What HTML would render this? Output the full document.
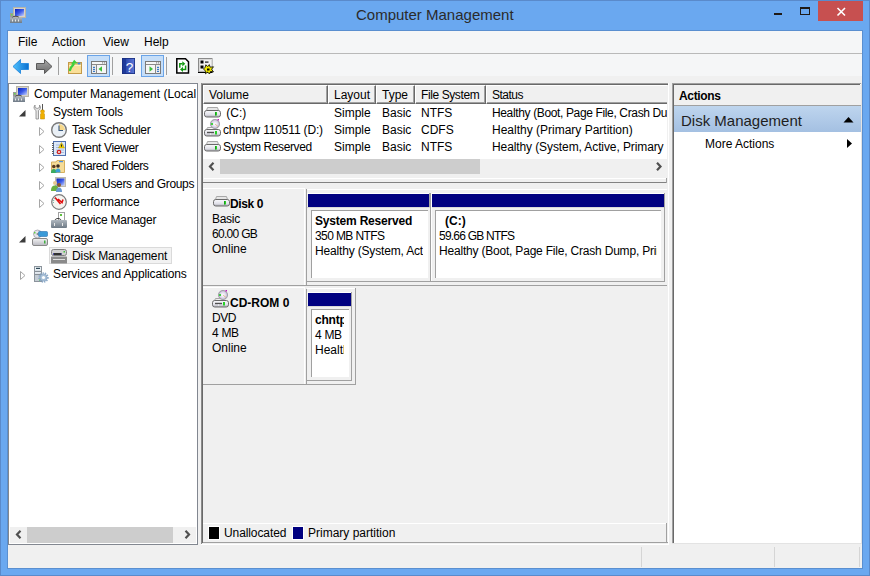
<!DOCTYPE html>
<html><head><meta charset="utf-8">
<style>
*{margin:0;padding:0;box-sizing:border-box}
html,body{width:870px;height:576px;overflow:hidden}
body{position:relative;background:#6AA8F0;font-family:"Liberation Sans",sans-serif;font-size:12px;color:#000}
.a{position:absolute}
.t{position:absolute;white-space:nowrap;font-size:12px;line-height:10px}
.b{font-weight:bold}
</style></head><body>
<!-- outer frame lines -->
<div class="a" style="left:0;top:0;width:870px;height:576px;border:1px solid #5A8ACB"></div>
<!-- title icon -->
<svg class="a" style="left:8px;top:4px" width="20" height="20" viewBox="8 4 20 20">
  <defs><linearGradient id="scr0" x1="0" y1="0" x2="1" y2="1"><stop offset="0" stop-color="#0A1FB8"/><stop offset="0.5" stop-color="#3A5AE8"/><stop offset="1" stop-color="#C8D4FF"/></linearGradient>
  <linearGradient id="dev0" x1="0" y1="0" x2="0" y2="1"><stop offset="0" stop-color="#AEB6BE"/><stop offset="1" stop-color="#6E7A86"/></linearGradient></defs>
  <rect x="13.5" y="7.5" width="12" height="10" fill="#D8D4C8" stroke="#B8B4A8"/>
  <rect x="15" y="9" width="9" height="7" fill="url(#scr0)"/>
  <rect x="10" y="13" width="3" height="5" fill="#9A9A9A"/><rect x="11" y="14" width="1.5" height="1.5" fill="#6AD850"/>
  <path d="M12 18 C13 16 17 15.5 19 17.5" fill="none" stroke="#333" stroke-width="1"/>
  <rect x="10" y="17.5" width="12" height="5.5" fill="url(#dev0)"/>
  <rect x="12" y="19.5" width="1" height="2" fill="#E8E8E8"/><rect x="15" y="19.5" width="1" height="2" fill="#E8E8E8"/><rect x="18" y="19.5" width="1" height="2" fill="#E8E8E8"/>
</svg>
<!-- title -->
<div class="t" style="left:356px;top:7px;font-size:15px;line-height:15px;color:#2B2B2B">Computer Management</div>
<!-- min / max / close -->
<div class="a" style="left:774px;top:13px;width:8px;height:2px;background:#1F1A17"></div>
<div class="a" style="left:800px;top:7px;width:10px;height:8px;border:1px solid #1F1A17;border-top-width:2px"></div>
<div class="a" style="left:818px;top:1px;width:45px;height:20px;background:#C75050"></div>
<svg class="a" style="left:830px;top:4px" width="20" height="16" viewBox="830 4 20 16">
  <path d="M837.5 8 L845 15.5 M845 8 L837.5 15.5" stroke="#fff" stroke-width="1.6"/>
</svg>
<!-- client area -->
<div class="a" style="left:7px;top:30px;width:856px;height:539px;border:1px solid #5A8FD0;background:#F0F0F0"></div>
<!-- menu bar -->
<div class="a" style="left:8px;top:31px;width:854px;height:23px;background:#F5F6F7;border-bottom:1px solid #B9B9B9"></div>
<div class="t" style="left:18px;top:37px">File</div>
<div class="t" style="left:52px;top:37px">Action</div>
<div class="t" style="left:103px;top:37px">View</div>
<div class="t" style="left:144px;top:37px">Help</div>
<!-- toolbar -->
<div class="a" style="left:8px;top:54px;width:854px;height:22px;background:#F5F6F7"></div>
<!-- tree pane -->
<div class="a" style="left:8px;top:83px;width:190px;height:462px;background:#fff;border:1px solid #828790"></div>
<!-- toolbar icons -->
<svg class="a" style="left:8px;top:54px" width="220" height="23" viewBox="8 54 220 23">
  <defs>
    <linearGradient id="gb" x1="0" y1="0" x2="1" y2="0"><stop offset="0" stop-color="#4FC3FF"/><stop offset="1" stop-color="#0A6FD0"/></linearGradient>
    <linearGradient id="gg" x1="0" y1="0" x2="0" y2="1"><stop offset="0" stop-color="#A8A8A8"/><stop offset="1" stop-color="#6A6A6A"/></linearGradient>
    <linearGradient id="gf" x1="0" y1="0" x2="0" y2="1"><stop offset="0" stop-color="#FBE7A6"/><stop offset="1" stop-color="#E8C273"/></linearGradient>
    <linearGradient id="gh" x1="0" y1="0" x2="1" y2="0"><stop offset="0" stop-color="#1D3A9A"/><stop offset="0.3" stop-color="#3550B8"/><stop offset="1" stop-color="#6A86E0"/></linearGradient>
  </defs>
  <!-- back -->
  <path d="M13 66.5 L20.5 59.5 L20.5 63.5 L28.5 63.5 L28.5 69.5 L20.5 69.5 L20.5 73.5 Z" fill="url(#gb)" stroke="#2E8FE0" stroke-width="1" stroke-linejoin="round"/>
  <!-- forward -->
  <path d="M52 66.5 L44.5 59.5 L44.5 63.5 L36.5 63.5 L36.5 69.5 L44.5 69.5 L44.5 73.5 Z" fill="url(#gg)" stroke="#5A5A5A" stroke-width="1" stroke-linejoin="round"/>
  <!-- sep -->
  <rect x="58" y="57" width="1" height="18" fill="#A0A0A0"/>
  <!-- up folder -->
  <rect x="68.5" y="62.5" width="13" height="11" fill="#EBCB78" stroke="#C49A48" stroke-width="1"/>
  <rect x="69" y="65" width="12" height="8" fill="#FADF98"/>
  <rect x="69" y="65" width="12" height="1" fill="#FFF0C0"/>
  <ellipse cx="79" cy="63.5" rx="1.6" ry="0.9" fill="#3A8AE8"/>
  <path d="M70 70 C70.5 67.5 72 66 73.5 64.5" fill="none" stroke="#3CD03C" stroke-width="2.4" stroke-linecap="round"/>
  <path d="M71 64.2 L74.2 59.8 L77.5 63.2 Z" fill="#3CD03C"/>
  <!-- highlighted 1 -->
  <rect x="87.5" y="55.5" width="22" height="21" fill="#C6DEF8" stroke="#6AA4E8"/>
  <rect x="91.5" y="61.5" width="15" height="12" fill="#F6F6F6" stroke="#7A7A7A"/>
  <rect x="92" y="64" width="14" height="1" fill="#8A8A8A"/>
  <rect x="102" y="62.3" width="1.2" height="1.2" fill="#8A8A8A"/><rect x="104" y="62.3" width="1.2" height="1.2" fill="#8A8A8A"/>
  <rect x="92" y="65" width="4" height="8" fill="#EDEDED"/>
  <rect x="96" y="65" width="1" height="8.5" fill="#8A8A8A"/>
  <rect x="93" y="66.8" width="2" height="1.2" fill="#3A7AC8"/><rect x="93" y="68.8" width="2" height="1.2" fill="#3A7AC8"/><rect x="93" y="70.8" width="2" height="1.2" fill="#3A7AC8"/>
  <path d="M98.5 69 L102 66.3 L102 71.7 Z" fill="#3CBF3C"/>
  <!-- sep -->
  <rect x="112" y="57" width="1" height="18" fill="#A0A0A0"/>
  <!-- help -->
  <rect x="122" y="58" width="13" height="16" fill="#4A66C8"/>
  <rect x="122" y="58" width="4" height="16" fill="#1E3A9A"/>
  <rect x="126" y="58" width="9" height="16" fill="url(#gh)" opacity="0.6"/>
  <rect x="122.4" y="58.4" width="12.2" height="15.2" fill="none" stroke="#1A2F80" stroke-width="0.8"/>
  <text x="129.5" y="71.5" font-family="Liberation Sans" font-size="13.5" fill="#fff" text-anchor="middle">?</text>
  <!-- highlighted 2 -->
  <rect x="141.5" y="55.5" width="22" height="21" fill="#C6DEF8" stroke="#6AA4E8"/>
  <rect x="145.5" y="61.5" width="15" height="12" fill="#F6F6F6" stroke="#7A7A7A"/>
  <rect x="146" y="64" width="14" height="1" fill="#8A8A8A"/>
  <rect x="156" y="62.3" width="1.2" height="1.2" fill="#8A8A8A"/><rect x="158" y="62.3" width="1.2" height="1.2" fill="#8A8A8A"/>
  <rect x="155" y="65" width="1" height="8.5" fill="#8A8A8A"/>
  <rect x="156" y="65" width="4" height="8" fill="#EDEDED"/>
  <rect x="157" y="66.8" width="2" height="1.2" fill="#3A7AC8"/><rect x="157" y="68.8" width="2" height="1.2" fill="#3A7AC8"/><rect x="157" y="70.8" width="2" height="1.2" fill="#3A7AC8"/>
  <path d="M149.5 66.3 L153 69 L149.5 71.7 Z" fill="#3CBF3C"/>
  <!-- sep -->
  <rect x="166" y="57" width="1" height="18" fill="#A0A0A0"/>
  <!-- refresh -->
  <path d="M176.8 58.8 L185.5 58.8 L188.5 61.8 L188.5 73 L176.8 73 Z" fill="#fff" stroke="#000" stroke-width="1.5" stroke-linejoin="miter"/>
  <path d="M179.8 67.8 V63.8 H182.5" fill="none" stroke="#119911" stroke-width="1.5"/>
  <path d="M182.3 61.2 L185.3 63.8 L182.3 66.4 Z" fill="#119911"/>
  <path d="M185.6 65.6 V69.4 H182.8" fill="none" stroke="#119911" stroke-width="1.5"/>
  <path d="M183 66.8 L180 69.4 L183 72 Z" fill="#119911"/>
  <!-- properties -->
  <rect x="198" y="58" width="14.5" height="14.5" fill="#8A8A8A"/>
  <rect x="198" y="72" width="14.5" height="1" fill="#000"/>
  <rect x="199" y="59" width="13" height="12.5" fill="#DADADA"/>
  <rect x="200" y="60" width="11" height="10.5" fill="#F2F2F2"/>
  <rect x="200.5" y="60.5" width="3" height="3" fill="#000"/>
  <rect x="205" y="61.5" width="3.5" height="1.2" fill="#111"/>
  <rect x="200.5" y="65.5" width="3" height="3" fill="#000"/>
  <path d="M203.5 69 L205.2 67.2 L205.8 64.8 L207.8 66.6 L209.3 64.6 L210.2 67.2 L213.5 66.8 L211.5 69.3 L213.5 71.8 L210.5 71.4 L209.5 74 L207.5 72 L205.5 73.8 L205.6 71.2 Z" fill="#F2EA00" stroke="#000" stroke-width="0.8"/>
  <rect x="207" y="68.5" width="2.5" height="2" fill="#000"/>
</svg>
<!-- tree -->
<svg class="a" style="left:9px;top:84px" width="188" height="200" viewBox="9 84 188 200">
  <defs>
    <linearGradient id="scr" x1="0" y1="0" x2="1" y2="1"><stop offset="0" stop-color="#0A1FB8"/><stop offset="0.5" stop-color="#3A5AE8"/><stop offset="1" stop-color="#C8D4FF"/></linearGradient>
    <linearGradient id="dev" x1="0" y1="0" x2="0" y2="1"><stop offset="0" stop-color="#AEB6BE"/><stop offset="1" stop-color="#6E7A86"/></linearGradient>
    <linearGradient id="drv" x1="0" y1="0" x2="0" y2="1"><stop offset="0" stop-color="#F4F4F4"/><stop offset="1" stop-color="#B8B8C0"/></linearGradient>
  </defs>
  <!-- Computer Management icon (13..29, 86..102) -->
  <rect x="16.5" y="86.5" width="12" height="10" fill="#D8D4C8" stroke="#B8B4A8"/>
  <rect x="18" y="88" width="9" height="7" fill="url(#scr)"/>
  <rect x="13" y="92" width="3" height="5" fill="#9A9A9A"/><rect x="14" y="93" width="1.5" height="1.5" fill="#6AD850"/>
  <path d="M15 97 C16 95 20 94.5 22 96.5" fill="none" stroke="#333" stroke-width="1"/>
  <rect x="13" y="96.5" width="12" height="5.5" fill="url(#dev)"/>
  <rect x="15" y="98.5" width="1" height="2" fill="#E8E8E8"/><rect x="18" y="98.5" width="1" height="2" fill="#E8E8E8"/><rect x="21" y="98.5" width="1" height="2" fill="#E8E8E8"/>
  <!-- expanded triangle System Tools -->
  <path d="M19 116.5 L25.5 110 L25.5 116.5 Z" fill="#3C3C3C"/>
  <!-- wrench+screwdriver (34..45, 104..120) -->
  <path d="M35 105 L34 107 C34 109 35 110 36 110.5 L36 119 L38.5 119 L38.5 110.5 C39.5 110 40.5 109 40.5 107 L39.5 105 L39.5 107.5 L37.2 108.5 L35 107.5 Z" fill="#E4E4E4" stroke="#888" stroke-width="0.8"/>
  <rect x="42" y="104" width="1" height="6" fill="#555"/>
  <path d="M41 110 L44 110 L44.5 112 L43.5 113 L44.5 114 L44.5 119 L40.5 119 L40.5 114 L41.5 113 L40.5 112 Z" fill="#F0B000" stroke="#C08800" stroke-width="0.5"/>
  <!-- collapsed triangles level2 -->
  <g fill="#fff" stroke="#A6A6A6" stroke-width="1">
    <path d="M39.5 127.5 L44 131.5 L39.5 135.5 Z"/>
    <path d="M39.5 145.5 L44 149.5 L39.5 153.5 Z"/>
    <path d="M39.5 163.5 L44 167.5 L39.5 171.5 Z"/>
    <path d="M39.5 181.5 L44 185.5 L39.5 189.5 Z"/>
    <path d="M39.5 199.5 L44 203.5 L39.5 207.5 Z"/>
    <path d="M20.5 271.5 L25 275.5 L20.5 279.5 Z"/>
  </g>
  <!-- clock (51..67, 122..138) -->
  <circle cx="59" cy="130" r="7.3" fill="#EAF0F6" stroke="#7A7A7A" stroke-width="1.4"/>
  <path d="M59 124 A6 6 0 0 1 65 130 L59 130 Z" fill="#F7D88A"/>
  <path d="M59 125.5 L59 130.5 L63 130.5" fill="none" stroke="#3A5A80" stroke-width="1.1"/>
  <!-- event viewer (52..66, 141..156) -->
  <rect x="53.5" y="141.5" width="12" height="14" fill="#DCE8F8" stroke="#5070B0"/>
  <g stroke="#9AB0D8" stroke-width="0.8"><path d="M56 145 H64 M56 147.5 H64 M56 150 H64 M56 152.5 H64"/></g>
  <g fill="#606060"><rect x="52" y="143" width="2" height="1"/><rect x="52" y="145" width="2" height="1"/><rect x="52" y="147" width="2" height="1"/><rect x="52" y="149" width="2" height="1"/><rect x="52" y="151" width="2" height="1"/><rect x="52" y="153" width="2" height="1"/></g>
  <path d="M61.5 142.5 L64.5 148 L58.5 148 Z" fill="#F2D200" stroke="#B09000" stroke-width="0.5"/><rect x="61" y="144.5" width="1" height="2.2" fill="#222"/>
  <circle cx="59" cy="152" r="2.3" fill="#D02020"/><path d="M58 151 L60 153 M60 151 L58 153" stroke="#fff" stroke-width="0.7"/>
  <!-- shared folders (51..65, 159..174) -->
  <path d="M51.5 162 L56 162 L57 160.5 L64.5 160.5 L64.5 172.5 L51.5 172.5 Z" fill="#F6DC98" stroke="#D4B060" stroke-width="1"/>
  <rect x="59" y="161" width="4" height="1.2" fill="#4A90E0"/>
  <circle cx="53.8" cy="166.5" r="1.8" fill="#5A3A20"/><path d="M51 173 C51 170 52 169 53.8 169 C55.6 169 56.5 170 56.5 173 Z" fill="#3AAA60"/>
  <circle cx="58" cy="166" r="1.8" fill="#3A2A20"/><path d="M55.5 172.5 C55.5 169.5 56.5 168.5 58 168.5 C59.8 168.5 60.5 169.5 60.5 172.5 Z" fill="#3AA0D8"/>
  <!-- local users (51..66, 177..192) -->
  <rect x="55.5" y="177.5" width="10" height="9" fill="#D8D4C8" stroke="#C0BCB0"/>
  <rect x="56.5" y="178.5" width="8" height="7" fill="url(#scr)"/>
  <circle cx="55" cy="183" r="2" fill="#E8C890"/><path d="M51 191 C51 187 52.5 185.5 55 185.5 C57.5 185.5 58.5 187 58.5 191 Z" fill="#6AB040"/>
  <circle cx="59" cy="185" r="2" fill="#8A5A30"/><path d="M56 192 C56 189 57 187.5 59 187.5 C61 187.5 62 189 62 192 Z" fill="#6A9AD0"/>
  <!-- performance (51..67, 194..210) -->
  <circle cx="59" cy="202" r="7.3" fill="#F6F4F0" stroke="#7A7A7A" stroke-width="1.2"/>
  <path d="M55 197.5 L60.5 204 M58 199 L62 202.5 L63 199.5" fill="none" stroke="#E01010" stroke-width="1.6"/>
  <path d="M53.5 203 A6 6 0 0 1 55 198" fill="none" stroke="#50A090" stroke-width="1" stroke-dasharray="1 1"/>
  <!-- device manager (51..67, 212..228) -->
  <rect x="58.5" y="212.5" width="6" height="8" fill="#fff" stroke="#A0A0A0"/>
  <rect x="60" y="214" width="2" height="2" fill="#60C040"/>
  <path d="M55 220 C56 218 60 218 61 220" fill="none" stroke="#333" stroke-width="1"/>
  <rect x="51" y="220" width="16" height="8" rx="1" fill="url(#dev)"/>
  <rect x="54" y="223" width="1" height="3" fill="#E8E8E8"/><rect x="62" y="223" width="1" height="3" fill="#E8E8E8"/>
  <!-- storage expanded triangle -->
  <path d="M19 242.5 L25.5 236 L25.5 242.5 Z" fill="#3C3C3C"/>
  <!-- storage icon (32..48, 230..246) -->
  <circle cx="37.5" cy="234" r="4" fill="#E4E4EA" stroke="#A0A0A8" stroke-width="0.8"/><circle cx="37.5" cy="234" r="1" fill="#888"/><rect x="34" y="232" width="1.5" height="1.5" fill="#60D040"/>
  <rect x="38.5" y="231.5" width="9" height="5" rx="1" fill="#3A9AD8" stroke="#2A70B0" stroke-width="0.6"/>
  <rect x="32.5" y="238.5" width="15" height="7" rx="1.5" fill="url(#drv)" stroke="#888" stroke-width="1"/>
  <rect x="44" y="240.5" width="1.5" height="3" fill="#40B040"/>
  <!-- selection box Disk Management -->
  <rect x="49.5" y="247.5" width="122" height="16" fill="#F2F2F2" stroke="#DADADA"/>
  <!-- disk mgmt icon (51..67, 248..264) -->
  <rect x="51.5" y="249.5" width="15" height="6" rx="2" fill="#D0D0D0" stroke="#808080"/>
  <rect x="53.5" y="253" width="8" height="2" fill="#303030"/>
  <rect x="53" y="253.5" width="1" height="1" fill="#2020C0"/><rect x="60.5" y="253.5" width="1" height="1" fill="#2020C0"/>
  <rect x="63.5" y="251" width="1.5" height="1.5" fill="#40C040"/>
  <rect x="51" y="256.5" width="16" height="7" rx="0.5" fill="#8A8A8A"/>
  <rect x="53" y="259" width="12" height="1" fill="#E0E0E0"/>
  <!-- services icon (32..48, 266..282) -->
  <rect x="34.5" y="266.5" width="7" height="15" fill="#C4CCD4" stroke="#8C949C"/>
  <rect x="35" y="267" width="6" height="3.5" fill="#E8F0F4"/>
  <rect x="36" y="267.8" width="4" height="1.2" fill="#304858"/>
  <rect x="35" y="271" width="6" height="0.8" fill="#7A8088"/>
  <rect x="35" y="272" width="6" height="1.8" fill="#E4EAF0"/>
  <rect x="35" y="274" width="6" height="0.8" fill="#7A8088"/>
  <rect x="39" y="279.5" width="2" height="1.5" fill="#60D040"/>
  <circle cx="43.5" cy="277.5" r="3.6" fill="#A8C0D8" stroke="#7A98B8" stroke-width="0.6"/>
  <circle cx="43.5" cy="277.5" r="4.4" fill="none" stroke="#8AA8C8" stroke-width="1.6" stroke-dasharray="1.3 1.1"/>
  <circle cx="43.5" cy="277.5" r="1.6" fill="#fff"/>
</svg>
<div class="a" style="left:9px;top:84px;width:187px;height:443px;overflow:hidden">
  <div class="t" style="left:25px;top:5px;letter-spacing:0px">Computer Management (Local</div>
  <div class="t" style="left:44px;top:23px;letter-spacing:-0.1px">System Tools</div>
  <div class="t" style="left:63px;top:41px;letter-spacing:-0.25px">Task Scheduler</div>
  <div class="t" style="left:63px;top:59px;letter-spacing:-0.34px">Event Viewer</div>
  <div class="t" style="left:63px;top:77px;letter-spacing:-0.4px">Shared Folders</div>
  <div class="t" style="left:63px;top:95px;letter-spacing:-0.33px">Local Users and Groups</div>
  <div class="t" style="left:63px;top:113px;letter-spacing:-0.1px">Performance</div>
  <div class="t" style="left:63px;top:131px;letter-spacing:-0.22px">Device Manager</div>
  <div class="t" style="left:44px;top:149px;letter-spacing:-0.25px">Storage</div>
  <div class="t" style="left:63px;top:167px;letter-spacing:-0.1px">Disk Management</div>
  <div class="t" style="left:44px;top:185px;letter-spacing:-0.12px">Services and Applications</div>
</div>
<!-- tree scrollbar -->
<div class="a" style="left:10px;top:527px;width:186px;height:16px;background:#F0F0F0"></div>
<div class="a" style="left:27px;top:527px;width:146px;height:16px;background:#CDCDCD"></div>
<svg class="a" style="left:10px;top:527px" width="186" height="16" viewBox="10 527 186 16">
  <path d="M20.5 530.8 L17 534.5 L20.5 538.2" fill="none" stroke="#505050" stroke-width="2.2"/>
  <path d="M185.5 530.8 L189 534.5 L185.5 538.2" fill="none" stroke="#505050" stroke-width="2.2"/>
</svg>
<!-- center pane -->
<div class="a" style="left:201px;top:83px;width:468px;height:462px;background:#F0F0F0"></div>
<div class="a" style="left:201px;top:83px;width:467px;height:1px;background:#A0A0A0"></div>
<div class="a" style="left:202px;top:84px;width:466px;height:1px;background:#696969"></div>
<div class="a" style="left:201px;top:83px;width:1px;height:461px;background:#8A8A8A"></div>
<div class="a" style="left:202px;top:84px;width:1px;height:459px;background:#696969"></div>
<div class="a" style="left:668px;top:83px;width:1px;height:462px;background:#FFFFFF"></div>
<div class="a" style="left:201px;top:544px;width:468px;height:1px;background:#FFFFFF"></div>
<!-- list white area -->
<div class="a" style="left:203px;top:104px;width:464px;height:55px;background:#FFFFFF"></div>
<!-- header buttons -->
<div class="a" style="left:203px;top:85px;width:125px;height:19px;background:#F0F0F0;border-left:1px solid #fff;border-top:1px solid #fff;border-right:1px solid #696969;border-bottom:1px solid #696969;box-shadow:inset -1px -1px 0 #A0A0A0"></div>
<div class="a" style="left:328px;top:85px;width:48px;height:19px;background:#F0F0F0;border-left:1px solid #fff;border-top:1px solid #fff;border-right:1px solid #696969;border-bottom:1px solid #696969;box-shadow:inset -1px -1px 0 #A0A0A0"></div>
<div class="a" style="left:376px;top:85px;width:39px;height:19px;background:#F0F0F0;border-left:1px solid #fff;border-top:1px solid #fff;border-right:1px solid #696969;border-bottom:1px solid #696969;box-shadow:inset -1px -1px 0 #A0A0A0"></div>
<div class="a" style="left:415px;top:85px;width:71px;height:19px;background:#F0F0F0;border-left:1px solid #fff;border-top:1px solid #fff;border-right:1px solid #696969;border-bottom:1px solid #696969;box-shadow:inset -1px -1px 0 #A0A0A0"></div>
<div class="a" style="left:486px;top:85px;width:181px;height:19px;background:#F0F0F0;border-left:1px solid #fff;border-top:1px solid #fff;border-bottom:1px solid #696969;box-shadow:inset 0 -1px 0 #A0A0A0"></div>
<div class="t" style="left:209px;top:90px">Volume</div>
<div class="t" style="left:334px;top:90px">Layout</div>
<div class="t" style="left:382px;top:90px">Type</div>
<div class="t" style="left:421px;top:90px;letter-spacing:-0.4px">File System</div>
<div class="t" style="left:492px;top:90px;letter-spacing:-0.5px">Status</div>
<!-- rows -->
<svg width="0" height="0" style="position:absolute">
  <defs>
    <linearGradient id="dbody" x1="0" y1="0" x2="0" y2="1"><stop offset="0" stop-color="#FAFAFC"/><stop offset="0.6" stop-color="#E2E2EA"/><stop offset="1" stop-color="#B0B0B8"/></linearGradient>
    <radialGradient id="disc" cx="0.5" cy="0.5" r="0.5"><stop offset="0" stop-color="#FFFFFF"/><stop offset="0.25" stop-color="#F4F4F8"/><stop offset="0.7" stop-color="#D8D0E8"/><stop offset="1" stop-color="#A8A8B0"/></radialGradient>
    <symbol id="drive" viewBox="0 0 17 11">
      <path d="M2.5 3.5 L3.5 0.5 L13.5 0.5 L14.5 3.5 Z" fill="#E6E6E6" stroke="#A8A8A8" stroke-width="1"/>
      <rect x="0.5" y="3.5" width="16" height="6.5" rx="2.2" fill="url(#dbody)" stroke="#6A6A6A" stroke-width="1"/>
      <rect x="11" y="5" width="2" height="3.5" fill="#28D028"/>
      <rect x="11" y="5" width="0.6" height="3.5" fill="#108010"/>
    </symbol>
    <symbol id="cddrive" viewBox="0 0 17 18">
      <circle cx="11" cy="5" r="4.6" fill="url(#disc)" stroke="#9898A0" stroke-width="0.8"/>
      <rect x="7" y="4" width="2" height="2" fill="#40D040"/>
      <rect x="13.5" y="0" width="1.5" height="1.5" fill="#C020C0"/>
      <path d="M11 5 L14 7.5" stroke="#E0B080" stroke-width="0.8"/>
      <path d="M2.5 10.5 L3.5 8.5 L8 8.5" fill="#E6E6E6" stroke="#A8A8A8" stroke-width="1"/>
      <rect x="0.5" y="10.5" width="16" height="6.5" rx="2.2" fill="url(#dbody)" stroke="#6A6A6A" stroke-width="1"/>
      <rect x="3" y="12.8" width="7" height="1.4" fill="#505050"/>
      <rect x="6" y="14.5" width="1" height="1" fill="#fff"/>
      <rect x="11" y="12" width="2" height="3.5" fill="#28D028"/>
    </symbol>
  </defs>
</svg>
<svg class="a" style="left:204px;top:107px" width="17" height="11" viewBox="0 0 17 11"><use href="#drive"/></svg>
<svg class="a" style="left:204px;top:141px" width="17" height="11" viewBox="0 0 17 11"><use href="#drive"/></svg>
<svg class="a" style="left:204px;top:119px" width="17" height="18" viewBox="0 0 17 18"><use href="#cddrive"/></svg>
<div class="t" style="left:223px;top:108px">&nbsp;(C:)</div>
<div class="t" style="left:223px;top:125px;letter-spacing:-0.17px">chntpw 110511 (D:)</div>
<div class="t" style="left:223px;top:142px;letter-spacing:-0.4px">System Reserved</div>
<div class="t" style="left:334px;top:108px">Simple</div>
<div class="t" style="left:334px;top:125px">Simple</div>
<div class="t" style="left:334px;top:142px">Simple</div>
<div class="t" style="left:382px;top:108px">Basic</div>
<div class="t" style="left:382px;top:125px">Basic</div>
<div class="t" style="left:382px;top:142px">Basic</div>
<div class="t" style="left:421px;top:108px">NTFS</div>
<div class="t" style="left:421px;top:125px">CDFS</div>
<div class="t" style="left:421px;top:142px">NTFS</div>
<div class="a" style="left:492px;top:104px;width:175px;height:55px;overflow:hidden">
  <div class="t" style="left:0;top:4px;letter-spacing:-0.36px">Healthy (Boot, Page File, Crash Dump, Primary Partition)</div>
  <div class="t" style="left:0;top:21px">Healthy (Primary Partition)</div>
  <div class="t" style="left:0;top:38px;letter-spacing:-0.1px">Healthy (System, Active, Primary Partition)</div>
</div>
<!-- list scrollbar -->
<div class="a" style="left:203px;top:159px;width:464px;height:15px;background:#F0F0F0"></div>
<div class="a" style="left:220px;top:159px;width:260px;height:15px;background:#CDCDCD"></div>
<svg class="a" style="left:203px;top:159px" width="464" height="15" viewBox="203 159 464 15">
  <path d="M213.5 162.8 L210 166.5 L213.5 170.2" fill="none" stroke="#505050" stroke-width="2.2"/>
  <path d="M657 162.8 L660.5 166.5 L657 170.2" fill="none" stroke="#505050" stroke-width="2.2"/>
</svg>
<div class="a" style="left:204px;top:178px;width:463px;height:1px;background:#FFFFFF"></div>
<div class="a" style="left:203px;top:182px;width:464px;height:1px;background:#828282"></div>
<div class="a" style="left:666px;top:178px;width:1px;height:5px;background:#A0A0A0"></div>
<!-- graphical view: Disk 0 -->
<div class="a" style="left:203px;top:188px;width:102px;height:1px;background:#fff"></div>
<div class="a" style="left:304px;top:188px;width:1px;height:97px;background:#fff"></div>
<div class="a" style="left:203px;top:285px;width:464px;height:1px;background:#A0A0A0"></div>
<div class="a" style="left:306px;top:189px;width:1px;height:96px;background:#A0A0A0"></div>
<div class="a" style="left:307px;top:189px;width:360px;height:1px;background:#fff"></div>
<div class="a" style="left:307px;top:193px;width:357px;height:1px;background:#fff"></div>
<div class="a" style="left:308px;top:194px;width:121px;height:13px;background:#000080"></div>
<div class="a" style="left:432px;top:194px;width:232px;height:13px;background:#000080"></div>
<div class="a" style="left:429px;top:193px;width:1px;height:14px;background:#A8A8A0"></div>
<div class="a" style="left:664px;top:193px;width:1px;height:89px;background:#A0A0A0"></div>
<div class="a" style="left:307px;top:207px;width:357px;height:1px;background:#D8D8D8"></div>
<div class="a" style="left:430px;top:193px;width:1px;height:89px;background:#A0A0A0"></div>
<div class="a" style="left:431px;top:193px;width:1px;height:88px;background:#fff"></div>
<div class="a" style="left:307px;top:281px;width:358px;height:1px;background:#A0A0A0"></div>
<!-- SR box -->
<div class="a" style="left:311px;top:210px;width:117px;height:68px;background:#fff;border-left:1px solid #A0A0A0;border-top:1px solid #A0A0A0"></div>
<div class="a" style="left:312px;top:211px;width:111px;height:66px;overflow:hidden">
  <div class="t b" style="left:3px;top:5px;letter-spacing:-0.2px">System Reserved</div>
  <div class="t" style="left:3px;top:20px;letter-spacing:-0.6px">350 MB NTFS</div>
  <div class="t" style="left:3px;top:35px;letter-spacing:-0.17px">Healthy (System, Active, Primary Partition)</div>
</div>
<!-- C box -->
<div class="a" style="left:435px;top:210px;width:226px;height:68px;background:#fff;border-left:1px solid #A0A0A0;border-top:1px solid #A0A0A0"></div>
<div class="a" style="left:436px;top:211px;width:221px;height:66px;overflow:hidden">
  <div class="t b" style="left:9px;top:5px">(C:)</div>
  <div class="t" style="left:3px;top:20px;letter-spacing:-0.77px">59.66 GB NTFS</div>
  <div class="t" style="left:3px;top:35px;letter-spacing:-0.2px">Healthy (Boot, Page File, Crash Dump, Primary Partition)</div>
</div>
<svg class="a" style="left:213px;top:196px" width="17" height="11" viewBox="0 0 17 11"><use href="#drive"/></svg>
<div class="t b" style="left:230px;top:199px;letter-spacing:-0.4px">Disk 0</div>
<div class="t" style="left:212px;top:214px;letter-spacing:-0.3px">Basic</div>
<div class="t" style="left:212px;top:229px;letter-spacing:-0.7px">60.00 GB</div>
<div class="t" style="left:212px;top:244px">Online</div>

<!-- CD-ROM 0 -->
<div class="a" style="left:203px;top:287px;width:102px;height:1px;background:#fff"></div>
<div class="a" style="left:304px;top:287px;width:1px;height:97px;background:#fff"></div>
<div class="a" style="left:203px;top:384px;width:103px;height:1px;background:#A0A0A0"></div>
<div class="a" style="left:306px;top:289px;width:1px;height:96px;background:#A0A0A0"></div>
<div class="a" style="left:307px;top:288px;width:48px;height:1px;background:#fff"></div>
<div class="a" style="left:355px;top:288px;width:1px;height:97px;background:#A0A0A0"></div>
<div class="a" style="left:307px;top:384px;width:48px;height:1px;background:#A0A0A0"></div>
<div class="a" style="left:307px;top:292px;width:44px;height:1px;background:#fff"></div>
<div class="a" style="left:308px;top:293px;width:43px;height:13px;background:#000080"></div>
<div class="a" style="left:351px;top:292px;width:1px;height:89px;background:#A0A0A0"></div>
<div class="a" style="left:307px;top:306px;width:44px;height:1px;background:#D8D8D8"></div>
<div class="a" style="left:307px;top:380px;width:45px;height:1px;background:#A0A0A0"></div>
<div class="a" style="left:311px;top:309px;width:38px;height:68px;background:#fff;border-left:1px solid #A0A0A0;border-top:1px solid #A0A0A0"></div>
<div class="a" style="left:312px;top:310px;width:32px;height:66px;overflow:hidden">
  <div class="t b" style="left:3px;top:5px;letter-spacing:-0.2px">chntpw 110511 (D:)</div>
  <div class="t" style="left:3px;top:20px;letter-spacing:-0.3px">4 MB CDFS</div>
  <div class="t" style="left:3px;top:35px">Healthy (Primary Partition)</div>
</div>
<svg class="a" style="left:212px;top:290px" width="17" height="18" viewBox="0 0 17 18"><use href="#cddrive"/></svg>
<div class="t b" style="left:230px;top:298px;letter-spacing:0px">CD-ROM 0</div>
<div class="t" style="left:212px;top:313px;letter-spacing:-0.5px">DVD</div>
<div class="t" style="left:212px;top:328px;letter-spacing:-0.3px">4 MB</div>
<div class="t" style="left:212px;top:343px">Online</div>

<!-- legend -->
<div class="a" style="left:203px;top:523px;width:464px;height:1px;background:#fff"></div>
<div class="a" style="left:203px;top:542px;width:465px;height:1px;background:#A0A0A0"></div>
<div class="a" style="left:666px;top:523px;width:1px;height:19px;background:#A0A0A0"></div>
<div class="a" style="left:208px;top:526px;width:12px;height:14px;background:#000;border:1px solid #fff"></div>
<div class="t" style="left:224px;top:528px;letter-spacing:-0.1px">Unallocated</div>
<div class="a" style="left:292px;top:526px;width:12px;height:14px;background:#000080;border:1px solid #fff"></div>
<div class="t" style="left:308px;top:528px">Primary partition</div>
<!-- actions pane -->
<div class="a" style="left:672px;top:83px;width:190px;height:461px;background:#fff;border-right:1px solid #E3E3E3;border-bottom:1px solid #E3E3E3"></div>
<div class="a" style="left:672px;top:83px;width:189px;height:1px;background:#A0A0A0"></div>
<div class="a" style="left:673px;top:84px;width:187px;height:1px;background:#696969"></div>
<div class="a" style="left:672px;top:83px;width:1px;height:460px;background:#A0A0A0"></div>
<div class="a" style="left:673px;top:84px;width:1px;height:459px;background:#696969"></div>
<div class="a" style="left:674px;top:85px;width:187px;height:20px;background:#F0F0F0"></div>
<div class="a" style="left:674px;top:105px;width:187px;height:1px;background:#A0A0A0"></div>
<div class="a" style="left:674px;top:106px;width:187px;height:26px;background:linear-gradient(#BED5EE,#A4C0E2)"></div>
<div class="t b" style="left:679px;top:91px;letter-spacing:-0.35px">Actions</div>
<div class="t" style="left:681px;top:113px;font-size:15px;line-height:15px;color:#1E1E1E">Disk Management</div>
<svg class="a" style="left:840px;top:112px" width="20" height="40" viewBox="840 112 20 40">
  <path d="M843.5 122.5 L848.5 117 L853.5 122.5 Z" fill="#000"/>
  <path d="M847 139 L852 143.5 L847 148 Z" fill="#000"/>
</svg>
<div class="t" style="left:705px;top:139px">More Actions</div>
<!-- status bar -->
<div class="a" style="left:8px;top:545px;width:854px;height:23px;background:#F0F0F0"></div>
<div class="a" style="left:641px;top:547px;width:1px;height:20px;background:#D5D5D5"></div>
<div class="a" style="left:774px;top:547px;width:1px;height:20px;background:#D5D5D5"></div>
<div class="a" style="left:859px;top:547px;width:1px;height:20px;background:#D5D5D5"></div>
</body></html>
